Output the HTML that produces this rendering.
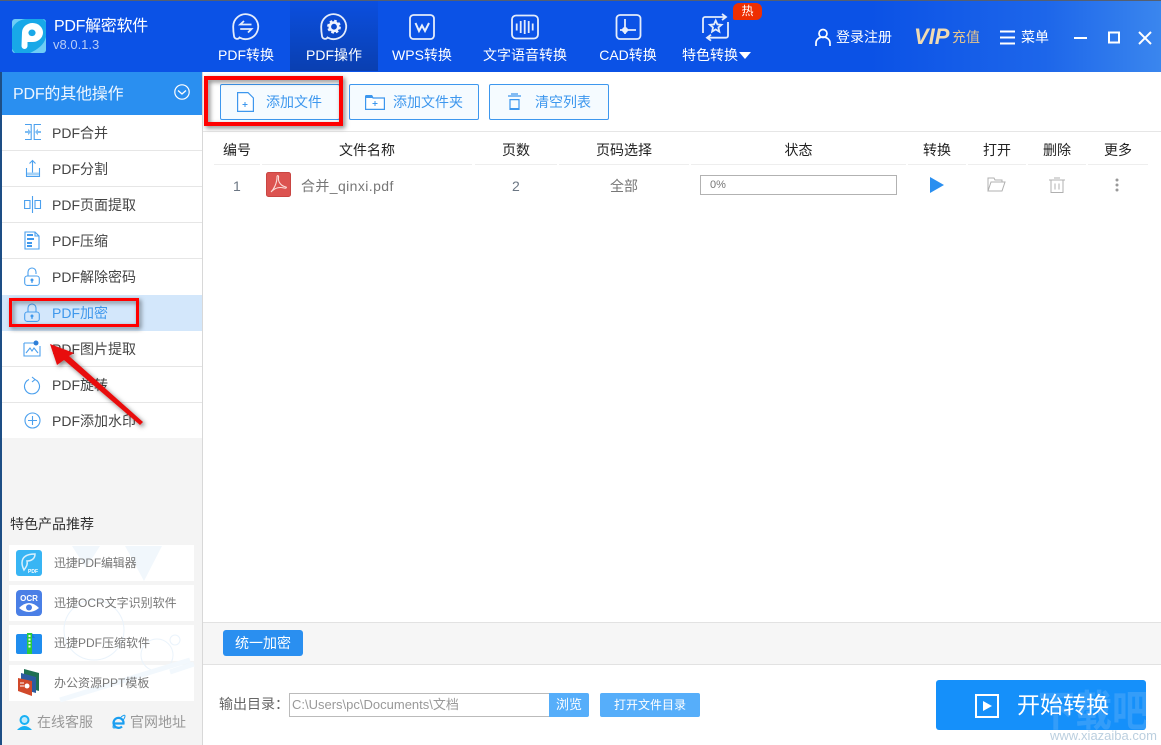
<!DOCTYPE html>
<html lang="zh"><head><meta charset="utf-8"><title>PDF解密软件</title>
<style>
*{box-sizing:border-box;margin:0;padding:0}
html,body{width:1161px;height:745px;overflow:hidden;background:#fff;font-family:"Liberation Sans","Noto Sans CJK SC",sans-serif}
.a{position:absolute;white-space:nowrap}
svg{position:absolute;overflow:visible}
.nav{color:#fff;font-size:14px;line-height:18px;top:46px;text-align:center}
.m{left:52px;font-size:14px;line-height:18px;color:#444}
.sep{left:2px;width:200px;height:1px;background:#e6e6e6}
.th{font-size:14px;line-height:18px;top:141px;color:#222;text-align:center}
.hl{top:164px;height:1px;background:#eee}
.btn{top:84px;height:36px;background:#f5fbff;border:1px solid #3d97ee;border-radius:2px;color:#3d97ee;font-size:14px;line-height:34px}
.rc{left:9px;width:185px;height:36px;background:#fff}
.rt{left:54px;font-size:12px;line-height:16px;color:#777}
.i{fill:none;stroke:#4ba0ee;stroke-width:1.100}
.w{fill:none;stroke:#e4ecfb;stroke-width:1.800}
</style></head><body>
<div class="a" style="left:0;top:0;width:1161px;height:72px;background:linear-gradient(90deg,#0b52e6 0,#0b52e6 75%,#1d66ea 90%,#3a86ee 100%)"></div>
<div class="a" style="left:0;top:0;width:1161px;height:1px;background:#555f70"></div>
<div class="a" style="left:290px;top:1px;width:88px;height:70px;background:linear-gradient(#0b4fdf,#0a3fb0)"></div>

<svg style="left:12px;top:19px" width="34" height="34" viewBox="0 0 34 34"><rect width="34" height="34" rx="3" fill="#6fcdf6"/><path d="M0 30V10C3 3 9 0 15 0H31L34 3V18C32 26 26 30 18 34H3Z" fill="#18a8e8"/><path d="M10 13.500A10.500 9.500 0 1 1 20 23H15.500V27A3 3 0 0 1 9.500 27Z" fill="#fff"/><ellipse cx="20" cy="13.800" rx="3.600" ry="3.300" fill="#18a8e8"/></svg>
<div class="a" style="left:54px;top:17px;color:#fff;font-size:16px;line-height:20px;letter-spacing:-.3px">PDF解密软件</div>
<div class="a" style="left:53px;top:37px;color:#b8cdf6;font-size:13px;line-height:16px">v8.0.1.3</div>

<svg style="left:232px;top:13px" width="28" height="28" viewBox="0 0 28 28"><path class="w" d="M2 23C1.500 20 1.200 17 1.200 13.700A12.500 12.500 0 1 1 7.500 24.500C6.500 26.500 2.500 26.500 2 23Z"/><path class="w" stroke-width="1.600" d="M12 8L8.200 11.500H19.500M8.200 16H19.500L16 19.500"/></svg>
<div class="a nav" style="left:218px;width:56px">PDF转换</div>
<svg style="left:320px;top:13px" width="28" height="28" viewBox="0 0 28 28"><path class="w" d="M2 23C1.500 20 1.200 17 1.200 13.700A12.500 12.500 0 1 1 7.500 24.500C6.500 26.500 2.500 26.500 2 23Z"/><circle cx="14" cy="13.700" r="4.200" fill="none" stroke="#f0f4ff" stroke-width="2.600"/><circle cx="14" cy="13.700" r="6" fill="none" stroke="#f0f4ff" stroke-width="1.800" stroke-dasharray="2.700 2.010"/></svg>
<div class="a nav" style="left:306px;width:56px">PDF操作</div>
<svg style="left:409px;top:14px" width="26" height="26" viewBox="0 0 26 26"><rect x="1" y="1" width="24" height="24" rx="3.500" class="w"/><path d="M6.500 9L10 17L13 11.500L16 17L20 9" fill="none" stroke="#e8effc" stroke-width="2"/></svg>
<div class="a nav" style="left:392px;width:60px">WPS转换</div>
<svg style="left:511px;top:14px" width="28" height="26" viewBox="0 0 28 26"><rect x="1" y="1.500" width="26" height="23" rx="4" class="w"/><path d="M5.700 9.500V16.500M9.700 7V19M13.700 6V20M17.700 7V19M21.700 9.500V16.500" class="w"/></svg>
<div class="a nav" style="left:483px;width:84px">文字语音转换</div>
<svg style="left:615px;top:14px" width="27" height="26" viewBox="0 0 27 26"><rect x="1.500" y="1" width="24" height="24" rx="3.500" class="w"/><path d="M10 5V20M5 16H21" class="w" stroke-width="1.500"/><circle cx="10" cy="16" r="3" fill="#e8effc"/></svg>
<div class="a nav" style="left:599px;width:58px">CAD转换</div>
<svg style="left:701px;top:13px" width="30" height="28" viewBox="0 0 30 28"><path d="M24 4H4A2 2 0 0 0 2 6V20M6 24.700H25A2 2 0 0 0 27 22.700V9M21 1L25 4L21 7M10 21.700L6 24.700L10 27.700" class="w" stroke-width="1.500"/><path d="M14.700 7.500L16.400 11.400L20.500 11.800L17.400 14.500L18.300 18.600L14.700 16.400L11.100 18.600L12 14.500L8.900 11.800L13 11.400Z" class="w" stroke-width="1.400"/></svg>
<div class="a nav" style="left:682px;width:56px">特色转换</div>
<svg style="left:739px;top:52px" width="12" height="7"><path d="M0 0H12L6 7Z" fill="#fff"/></svg>
<div class="a" style="left:733px;top:3px;width:29px;height:17px;background:#ee2f02;border-radius:6px 6px 6px 2px;color:#fff;font-size:12px;line-height:17px;text-align:center">热</div>

<svg style="left:815px;top:28px" width="16" height="18" viewBox="0 0 16 18"><circle cx="8" cy="5.500" r="4" fill="none" stroke="#fff" stroke-width="1.700"/><path d="M1 18V15A7 6 0 0 1 15 15V18" fill="none" stroke="#fff" stroke-width="1.700"/></svg>
<div class="a" style="left:836px;top:28px;color:#fff;font-size:14px;line-height:18px">登录注册</div>
<div class="a" style="left:914px;top:25px;color:#f0dbb2;font-size:22px;line-height:24px;font-weight:bold;font-style:italic;letter-spacing:0">VIP</div>
<div class="a" style="left:952px;top:28px;color:#e4c48f;font-size:14px;line-height:18px">充值</div>
<svg style="left:1000px;top:30px" width="15" height="15"><path d="M0 1.500H15M0 7.500H15M0 13.500H15" stroke="#fff" stroke-width="2"/></svg>
<div class="a" style="left:1021px;top:28px;color:#fff;font-size:14px;line-height:18px">菜单</div>
<svg style="left:1073px;top:30px" width="80" height="15"><path d="M1 8H14" stroke="#fff" stroke-width="2"/><rect x="36" y="2.500" width="10" height="10" fill="none" stroke="#fff" stroke-width="2"/><path d="M66 2L78 14M78 2L66 14" stroke="#fff" stroke-width="2"/></svg>

<div class="a" style="left:0;top:72px;width:2px;height:673px;background:#1d4e85"></div>
<div class="a" style="left:2px;top:72px;width:200px;height:673px;background:#f4f4f4"></div>
<div class="a" style="left:202px;top:72px;width:1px;height:673px;background:#d8d8d8"></div>
<div class="a" style="left:2px;top:72px;width:200px;height:43px;background:#2a8ff0"></div>
<div class="a" style="left:13px;top:85px;color:#eef6ff;font-size:16px;line-height:20px;letter-spacing:-.2px">PDF的其他操作</div>
<svg style="left:174px;top:84px" width="16" height="16"><circle cx="8" cy="8" r="7.200" fill="none" stroke="#fff" stroke-width="1.200"/><path d="M4 6.500L8 10L12 6.500" fill="none" stroke="#fff" stroke-width="1.300"/></svg>
<div class="a" style="left:2px;top:115px;width:200px;height:323px;background:#fff"></div>
<div class="a" style="left:2px;top:295px;width:200px;height:36px;background:#d3e7fb"></div>
<div class="a sep" style="top:150px"></div><div class="a sep" style="top:186px"></div><div class="a sep" style="top:222px"></div><div class="a sep" style="top:258px"></div><div class="a sep" style="top:366px"></div><div class="a sep" style="top:402px"></div>

<svg style="left:24px;top:123px" width="18" height="18"><path class="i" d="M1 1.500H7.200V16.500H1M17 1.500H10.200V16.500H17"/><path d="M1 8L4 8V5.800L7 9L4 12.200V10H1ZM17 8L14 8V5.800L11 9L14 12.200V10H17Z" fill="#7ebdf3"/></svg>
<div class="a m" style="top:124px">PDF合并</div>
<svg style="left:25px;top:158px" width="16" height="20"><path class="i" d="M1.500 10V18.500H14.500V10M7.500 15V2.500M4.500 5.500L7.500 2.500L10.500 5.500"/><rect x="2" y="14.500" width="12" height="3" fill="#a5d2f7"/></svg>
<div class="a m" style="top:160px">PDF分割</div>
<svg style="left:24px;top:196px" width="18" height="18"><path class="i" d="M8.500 0V17M.6 4.500H6V12.500H.6ZM11 4.500H16.500V12.500H11Z"/></svg>
<div class="a m" style="top:196px">PDF页面提取</div>
<svg style="left:24px;top:231px" width="16" height="19"><path class="i" d="M1 1H11L15 5V18H1ZM11 1V5H15"/><path d="M3 3H9V5H3ZM3 7H10V9H3ZM3 11H8V13H3ZM3 14H8V16H3Z" fill="#3f98ec"/></svg>
<div class="a m" style="top:232px">PDF压缩</div>
<svg style="left:24px;top:267px" width="16" height="19"><path class="i" d="M4 9V5A4 4 0 0 1 12 5V7"/><rect x=".7" y="9" width="14.600" height="9.400" rx="2.500" class="i"/><circle cx="8" cy="13" r="1.500" fill="#3f98ec"/><path d="M8 13V16" stroke="#3f98ec" stroke-width="1.200"/></svg>
<div class="a m" style="top:268px">PDF解除密码</div>
<svg style="left:24px;top:303px" width="16" height="19"><path class="i" d="M4 9V5A4 4 0 0 1 12 5V9"/><rect x=".7" y="9" width="14.600" height="9.400" rx="2.500" class="i"/><circle cx="8" cy="13" r="1.500" fill="#3f98ec"/><path d="M8 13V16" stroke="#3f98ec" stroke-width="1.200"/></svg>
<div class="a m" style="top:304px;color:#3f98ec">PDF加密</div>
<svg style="left:23px;top:340px" width="18" height="17"><path class="i" d="M1 3H14M17 6V16H1V3"/><path class="i" d="M3 13L7 8L9 11L11 8L15 13"/><circle cx="13" cy="3" r="2.500" fill="#2d7fd8"/></svg>
<div class="a m" style="top:340px">PDF图片提取</div>
<svg style="left:24px;top:376px" width="17" height="18"><path class="i" d="M11 3.500A7.500 7.500 0 1 1 5 3.500"/><path class="i" d="M8 1L11 3.500L8 6"/></svg>
<div class="a m" style="top:376px">PDF旋转</div>
<svg style="left:24px;top:412px" width="17" height="17"><circle cx="8.500" cy="8.500" r="7.500" class="i"/><path class="i" d="M4 8.500H13M8.500 4V13"/></svg>
<div class="a m" style="top:412px">PDF添加水印</div>

<div class="a" style="left:10px;top:515px;font-size:14px;line-height:18px;color:#333">特色产品推荐</div>
<div class="a rc" style="top:545px"></div><div class="a rc" style="top:585px"></div><div class="a rc" style="top:625px"></div><div class="a rc" style="top:665px"></div>
<svg style="left:0;top:0" width="203" height="745"><g fill="none" stroke="#eaf3fb" stroke-width="1"><path d="M125 546H162L144 581ZM72 546H100L86 568Z" fill="#f1f7fc" stroke="none"/><circle cx="94" cy="630" r="30"/><circle cx="157" cy="655" r="16"/><circle cx="175" cy="640" r="5"/><path d="M60 700L190 660M170 672L194 664" stroke-width="5" stroke="#f2f8fd"/></g></svg>
<svg style="left:16px;top:550px" width="26" height="26"><rect width="26" height="26" rx="3" fill="#38b5f4"/><path d="M6 13C6 6 12 4 19 4C19 9 15 11 11 11C12 15 10 17 8 20C7 18 6 16 6 13Z" fill="none" stroke="#d8f0fd" stroke-width="1.500"/><text x="12" y="23" font-size="5" font-weight="bold" fill="#fff">PDF</text></svg>
<div class="a rt" style="top:555px;letter-spacing:-.2px">迅捷PDF编辑器</div>
<svg style="left:16px;top:590px" width="26" height="26"><rect width="26" height="26" rx="4" fill="#4a7fe6"/><text x="13" y="11" font-size="8" font-weight="bold" fill="#fff" text-anchor="middle">OCR</text><path d="M3 18Q13 8 23 18Q13 26 3 18Z" fill="#fff"/><circle cx="13" cy="17.500" r="3" fill="#4a7fe6"/></svg>
<div class="a rt" style="top:595px">迅捷OCR文字识别软件</div>
<svg style="left:16px;top:633px" width="26" height="21"><path d="M0 3A2 2 0 0 1 2 1H24A2 2 0 0 1 26 3V19A2 2 0 0 1 24 21H2A2 2 0 0 1 0 19Z" fill="#1f8dee"/><path d="M0 5H10L13 0H16L19 5H26" fill="#177fdd"/><rect x="11" y="0" width="5" height="21" fill="#2ccb3e"/><path d="M13.500 2V15" stroke="#e8ffe8" stroke-width="2" stroke-dasharray="2 1.500"/></svg>
<div class="a rt" style="top:635px">迅捷PDF压缩软件</div>
<svg style="left:18px;top:669px" width="22" height="27"><path d="M6 0L21 4V22L6 18Z" fill="#1f7052"/><path d="M3 4L18 8V24L3 20Z" fill="#2c5aa0"/><path d="M0 9L14 12V27L0 22Z" fill="#d1492a"/><circle cx="9" cy="17" r="2.500" fill="#fff"/><path d="M2 14H6M2 17H6" stroke="#fff"/></svg>
<div class="a rt" style="top:675px">办公资源PPT模板</div>
<svg style="left:17px;top:714px" width="15" height="16"><circle cx="7.500" cy="6" r="5" fill="#18b0f4"/><circle cx="7.500" cy="6" r="3" fill="#bfeafc"/><path d="M0 16Q7.500 8 15 16Z" fill="#18b0f4"/></svg>
<div class="a" style="left:37px;top:713px;color:#999;font-size:14px;line-height:18px">在线客服</div>
<svg style="left:112px;top:714px" width="14" height="15"><path d="M2 9.500H11.500A5 5 0 1 0 10 12.500" fill="none" stroke="#1a9ef0" stroke-width="2.200"/><path d="M9 3Q13 0 13 2Q13 4 11 6M2 9Q0 14 2 14Q4 14 6 13" fill="none" stroke="#1a9ef0" stroke-width="1"/></svg>
<div class="a" style="left:130px;top:713px;color:#999;font-size:14px;line-height:18px">官网地址</div>

<div class="a btn" style="left:220px;width:120px;padding-left:45px">添加文件</div>
<div class="a btn" style="left:349px;width:130px;padding-left:43px">添加文件夹</div>
<div class="a btn" style="left:489px;width:120px;padding-left:45px">清空列表</div>
<svg style="left:237px;top:92px" width="17" height="20"><path d="M.6.6H11L16.400 6V19.400H.6Z" fill="#fff" stroke="#3d97ee" stroke-width="1.200"/><path d="M5.500 12.500H10.500M8 10V15" stroke="#3d97ee"/></svg>
<svg style="left:365px;top:94px" width="20" height="16"><path d="M.6 2H7L8 4H19.400V15.400H.6Z" fill="#fff" stroke="#3d97ee" stroke-width="1.200"/><path d="M1 1H7L8 4H1Z" fill="#3d97ee"/><path d="M7.500 9.500H12.500M10 7V12" stroke="#3d97ee"/></svg>
<svg style="left:507px;top:93px" width="15" height="18"><path d="M1 3H14M4 1H11M3 6.600H12V16.400H3Z" fill="none" stroke="#3d97ee" stroke-width="1.200"/><rect x="3" y="15" width="9" height="2" fill="#3d97ee"/></svg>
<div class="a" style="left:203px;top:131px;width:958px;height:1px;background:#e6e6e6"></div>

<div class="a th" style="left:214px;width:46px">编号</div><div class="a th" style="left:262px;width:210px">文件名称</div><div class="a th" style="left:475px;width:82px">页数</div><div class="a th" style="left:559px;width:130px">页码选择</div><div class="a th" style="left:691px;width:215px">状态</div><div class="a th" style="left:908px;width:58px">转换</div><div class="a th" style="left:968px;width:58px">打开</div><div class="a th" style="left:1028px;width:58px">删除</div><div class="a th" style="left:1088px;width:60px">更多</div>
<div class="a hl" style="left:214px;width:46px"></div><div class="a hl" style="left:262px;width:210px"></div><div class="a hl" style="left:475px;width:82px"></div><div class="a hl" style="left:559px;width:130px"></div><div class="a hl" style="left:691px;width:215px"></div><div class="a hl" style="left:908px;width:58px"></div><div class="a hl" style="left:968px;width:58px"></div><div class="a hl" style="left:1028px;width:58px"></div><div class="a hl" style="left:1088px;width:60px"></div>

<div class="a" style="left:233px;top:177px;font-size:14px;line-height:18px;color:#6b7683">1</div>
<svg style="left:266px;top:172px" width="25" height="25"><rect x=".5" y=".5" width="24" height="24" rx="2" fill="#dc5350" stroke="#c94542"/><path d="M5 20C8 17 11 11 11 5C11 3 13 3 12.500 6C12 10 15 14 20 15C21 15.500 20 16.500 18 16C14 15 10 15 5 20Z" fill="none" stroke="#fbdcd8" stroke-width="1.100"/></svg>
<div class="a" style="left:301px;top:177px;font-size:14px;line-height:18px;color:#777;letter-spacing:.4px">合并_qinxi.pdf</div>
<div class="a" style="left:512px;top:177px;font-size:14px;line-height:18px;color:#6b7683">2</div>
<div class="a" style="left:610px;top:177px;font-size:14px;line-height:18px;color:#777">全部</div>
<div class="a" style="left:700px;top:175px;width:197px;height:20px;border:1px solid #b2b2b2"></div>
<div class="a" style="left:710px;top:177px;font-size:11px;line-height:16px;color:#777">0%</div>
<svg style="left:930px;top:177px" width="14" height="16"><path d="M0 0L14 8L0 16Z" fill="#2a8ff0"/></svg>
<svg style="left:987px;top:177px" width="19" height="15"><path d="M1 14V1H7L8 3H15V5M1 14H15L18 5H4L1 14Z" fill="none" stroke="#b0b0b0"/></svg>
<svg style="left:1049px;top:177px" width="16" height="16"><path d="M0 3H16M5 1H11M2 3.500V15.500H14V3.500M6 6.500V12.500M10 6.500V12.500" fill="none" stroke="#b0b0b0"/></svg>
<svg style="left:1115px;top:178px" width="4" height="14"><circle cx="2" cy="2" r="1.500" fill="#999"/><circle cx="2" cy="7" r="1.500" fill="#999"/><circle cx="2" cy="12" r="1.500" fill="#999"/></svg>

<div class="a" style="left:203px;top:622px;width:958px;height:43px;background:#f6f6f6;border-top:1px solid #e2e2e2;border-bottom:1px solid #e2e2e2"></div>
<div class="a" style="left:223px;top:630px;width:80px;height:26px;background:#2a8ff0;border-radius:3px;color:#fff;font-size:14px;line-height:26px;text-align:center">统一加密</div>
<div class="a" style="left:219px;top:695px;font-size:14px;line-height:18px;color:#666">输出目录：</div>
<div class="a" style="left:289px;top:693px;width:261px;height:24px;border:1px solid #bbb;background:#fff;color:#999;font-size:13px;line-height:22px;padding-left:2px">C:\Users\pc\Documents\文档</div>
<div class="a" style="left:549px;top:693px;width:40px;height:24px;background:#56aefa;border-radius:0 2px 2px 0;color:#fff;font-size:13px;line-height:23px;text-align:center">浏览</div>
<div class="a" style="left:600px;top:693px;width:100px;height:24px;background:#56aefa;border-radius:2px;color:#fff;font-size:12px;line-height:24px;text-align:center">打开文件目录</div>
<div class="a" style="left:936px;top:680px;width:210px;height:50px;background:#1590fa;border-radius:3px"></div>
<svg style="left:975px;top:694px" width="24" height="24"><rect x="1" y="1" width="22" height="22" fill="none" stroke="#fff" stroke-width="2"/><path d="M8 7L17 12L8 17Z" fill="#fff"/></svg>
<div class="a" style="left:1017px;top:690px;font-size:23px;line-height:30px;color:#fff">开始转换</div>
<div class="a" style="left:1038px;top:689px;font-size:37px;line-height:40px;font-weight:bold;color:rgba(215,232,248,.16);transform:scaleY(1.150);transform-origin:top left">下载吧</div>
<div class="a" style="left:1050px;top:728px;font-size:13px;line-height:15px;color:rgba(170,195,215,.8)">www.xiazaiba.com</div>

<svg class="a" style="left:0;top:0" width="1161" height="745">
<defs><filter id="s" x="-10%" y="-15%" width="125%" height="145%"><feDropShadow dx="2" dy="2" stdDeviation="2.500" flood-color="#000" flood-opacity=".5"/></filter></defs>
<rect x="206" y="78" width="135" height="46" fill="none" stroke="#ff0000" stroke-width="4" filter="url(#s)"/>
<rect x="10.500" y="299.500" width="127" height="26" fill="none" stroke="#ff0000" stroke-width="3" filter="url(#s)"/>
<g filter="url(#s)"><path d="M50 344L57 365L64 360L140 425L143 422L69 356L74 353Z" fill="#e80f0f"/></g>
</svg>
</body></html>
